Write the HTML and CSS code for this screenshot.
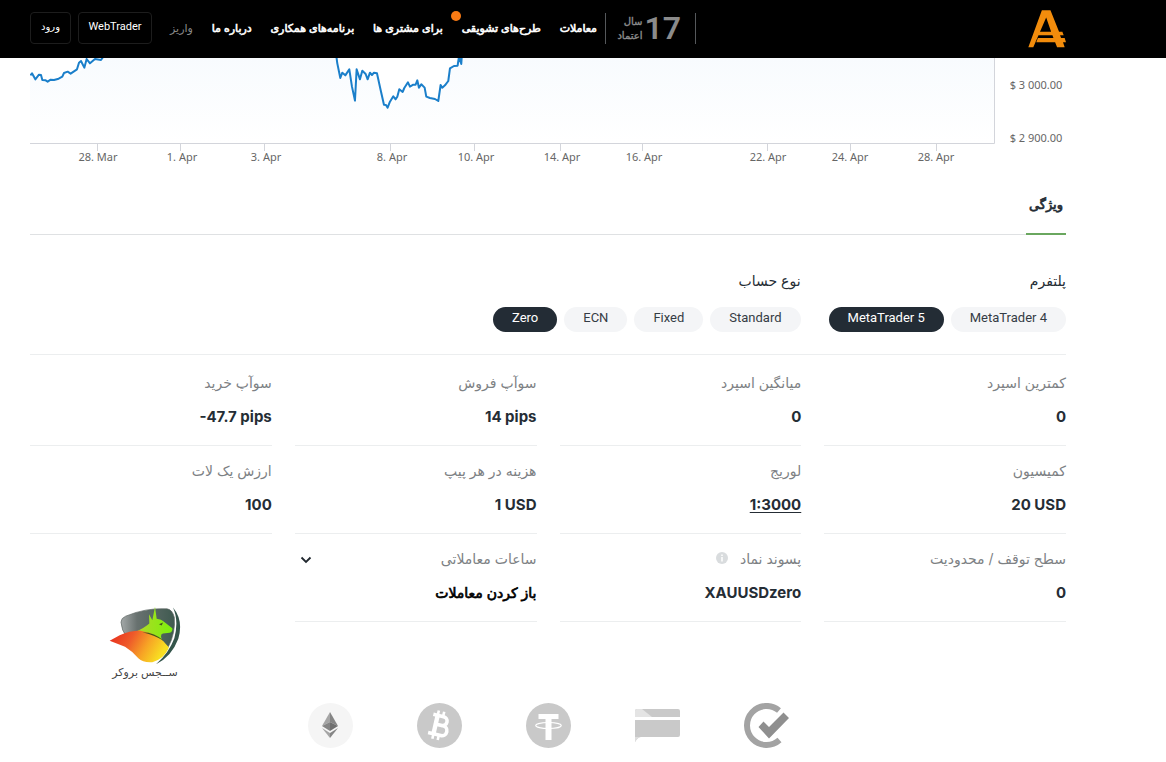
FILE: index.html
```html
<!DOCTYPE html>
<html lang="fa" dir="rtl">
<head>
<meta charset="utf-8">
<meta name="viewport" content="width=device-width, initial-scale=1">
<title>XAUUSD</title>
<link rel="stylesheet" href="styles.css">
</head>
<body>
<header class="header">
  <a class="logo" href="#" aria-label="A">
    <svg viewBox="205 25 115 117" width="38" height="39" aria-hidden="true">
      <path fill="#f28c0c" d="M247 28h26l26 65h10l4 11h-11l3 8h11l4 13h-9l5 15h-23l-6-15h-57l5-13h47l-3-8h-43l4-11h35l-15-43-39 90h-15z"/>
    </svg>
  </a>
  <div class="header-main">
    <div class="trust">
      <span class="trust-number">17</span>
      <span class="trust-text"><span>سال</span><span>اعتماد</span></span>
    </div>
    <nav class="nav">
      <a href="#">معاملات</a>
      <a class="has-dot" href="#">طرح‌های تشویقی</a>
      <a href="#">برای مشتری ها</a>
      <a href="#">برنامه‌های همکاری</a>
      <a href="#">درباره ما</a>
      <a class="muted" href="#">واریز</a>
    </nav>
    <div class="actions">
      <button class="header-btn" type="button">WebTrader</button>
      <button class="header-btn small" type="button">ورود</button>
    </div>
  </div>
</header>
<main class="page">
  <svg class="chart" viewBox="0 0 1036 110" direction="ltr" role="img" aria-label="XAUUSD">
    <defs>
      <linearGradient id="area" x1="0" y1="0" x2="0" y2="1">
        <stop offset="0" stop-color="#f8fbfe"/>
        <stop offset="1" stop-color="#ffffff"/>
      </linearGradient>
    </defs>
    <path fill="url(#area)" d="M0 17 20 24 44 16 70 2V0H307L312 18 325 14 332 14 347 16 358 49 390 24 400 40 408 43 421 8 430 0H965V85H0z"/>
    <g class="price" transform="translate(-30 -8) scale(.3333)">
      <path d="M91 76 96 70 106 88 117 74 123 75 127 90 137 91 143 95 152 89 162 90 176 86 187 80 192 69 203 65 212 71 222 64 231 58 237 38 243 33 253 53 260 27 270 40 285 27 303 30 310 20"/>
      <path d="M1008 10 1012 40 1021 84 1027 68 1036 76 1048 58 1056 110 1065 152 1070 58 1080 88 1087 62 1097 72 1103 88 1110 68 1116 75 1122 68 1131 70 1142 120 1152 164 1158 165 1163 173 1170 155 1180 139 1187 148 1192 140 1198 118 1208 126 1213 114 1224 97 1230 110 1240 104 1247 104 1252 91 1257 113 1264 103 1274 113 1279 140 1290 144 1305 147 1315 153 1322 105 1327 113 1335 106 1345 93 1350 55 1362 48 1373 47 1377 20 1384 42 1386 10"/>
    </g>
    <path class="axis" d="M0 85.500H964.500V0M67.500 86v7M150.500 86v7M234.500 86v7M360.500 86v7M444.500 86v7M530.500 86v7M612.500 86v7M737.500 86v7M820.500 86v7M906.500 86v7"/>
    <g class="labels">
      <text x="68" y="103">28. Mar</text>
      <text x="152" y="103">1. Apr</text>
      <text x="236" y="103">3. Apr</text>
      <text x="362" y="103">8. Apr</text>
      <text x="446" y="103">10. Apr</text>
      <text x="532" y="103">14. Apr</text>
      <text x="614" y="103">16. Apr</text>
      <text x="738" y="103">22. Apr</text>
      <text x="820" y="103">24. Apr</text>
      <text x="906" y="103">28. Apr</text>
      <text x="1006" y="31">$ 3 000.00</text>
      <text x="1006" y="84">$ 2 900.00</text>
    </g>
  </svg>

  <div class="tabs" role="tablist">
    <button class="tab" type="button" role="tab" aria-selected="true">ویژگی</button>
  </div>

  <section class="filters">
    <div class="filter">
      <h2 class="filter-title">پلتفرم</h2>
      <div class="pills">
        <button class="pill" type="button">MetaTrader 4</button>
        <button class="pill active" type="button">MetaTrader 5</button>
      </div>
    </div>
    <div class="filter">
      <h2 class="filter-title">نوع حساب</h2>
      <div class="pills">
        <button class="pill" type="button">Standard</button>
        <button class="pill" type="button">Fixed</button>
        <button class="pill" type="button">ECN</button>
        <button class="pill active" type="button">Zero</button>
      </div>
    </div>
  </section>

  <section class="specs">
    <div class="spec"><div class="spec-label">کمترین اسپرد</div><div class="spec-value">0</div></div>
    <div class="spec"><div class="spec-label">میانگین اسپرد</div><div class="spec-value">0</div></div>
    <div class="spec"><div class="spec-label">سوآپ فروش</div><div class="spec-value"><bdi>14 pips</bdi></div></div>
    <div class="spec"><div class="spec-label">سوآپ خرید</div><div class="spec-value"><bdi dir="ltr">-47.7 pips</bdi></div></div>
    <div class="spec"><div class="spec-label">کمیسیون</div><div class="spec-value"><bdi>20 USD</bdi></div></div>
    <div class="spec"><div class="spec-label">لوریج</div><div class="spec-value"><a href="#">1:3000</a></div></div>
    <div class="spec"><div class="spec-label">هزینه در هر پیپ</div><div class="spec-value"><bdi>1 USD</bdi></div></div>
    <div class="spec"><div class="spec-label">ارزش یک لات</div><div class="spec-value">100</div></div>
    <div class="spec"><div class="spec-label">سطح توقف / محدودیت</div><div class="spec-value">0</div></div>
    <div class="spec">
      <div class="spec-label">پسوند نماد
        <svg class="info" viewBox="0 0 12 12" width="12" height="12" aria-hidden="true"><circle cx="6" cy="6" r="6" fill="#d9dcde"/><path d="M6 2.500v1.500M6 5v4.500" stroke="#fff" stroke-width="1.500"/></svg>
      </div>
      <div class="spec-value">XAUUSDzero</div>
    </div>
    <div class="spec">
      <div class="spec-label">ساعات معاملاتی
        <button class="toggle" type="button" aria-label="ساعات معاملاتی"><svg viewBox="0 0 12 8" width="12" height="8" aria-hidden="true"><path d="M1.500 1.500 6 6l4.500-4.500" fill="none" stroke="#20272e" stroke-width="1.800"/></svg></button>
      </div>
      <div class="spec-value strong">باز کردن معاملات</div>
    </div>
    <div class="watermark">
      <svg viewBox="88 50 216 176" width="72" height="59" aria-hidden="true">
        <defs>
          <linearGradient id="shield" x1="0" x2="1"><stop offset="0" stop-color="#a4a9a9"/><stop offset=".3" stop-color="#68716f"/><stop offset="1" stop-color="#3f5a50"/></linearGradient>
          <linearGradient id="bear" x1="0" x2="1" y1="0" y2=".3"><stop offset="0" stop-color="#e8281c"/><stop offset=".4" stop-color="#ee5a2a"/><stop offset=".7" stop-color="#f7a325"/><stop offset="1" stop-color="#f8df22"/></linearGradient>
          <linearGradient id="bull" x1="0" x2="1"><stop offset="0" stop-color="#b9d52c"/><stop offset="1" stop-color="#7cf00c"/></linearGradient>
        </defs>
        <path d="M124 98Q124 86 138 80 200 54 262 58 278 60 284 84 288 130 266 172L140 140Q126 124 124 98z" fill="url(#shield)" stroke="#59625f" stroke-width="2"/>
        <path d="M280 54Q312 92 296 148 276 202 229 224 268 190 284 146 298 94 280 54z" fill="#34554b"/>
        <path d="M158 132Q200 112 209 102L208 74 218 92 226 52 231 88Q246 90 252 96L278 116Q280 126 270 130L250 132Q238 134 250 160L266 180 220 176z" fill="url(#bull)"/>
        <path d="M90 154 120 137Q150 124 180 123 238 132 268 174 252 210 218 218 190 220 176 206 156 184 136 172 118 171L99 176 94 170 108 163 91 162z" fill="url(#bear)"/>
        <path d="M188 128Q226 128 252 154 228 138 188 128zM238 104l12-5-4 9z" fill="#43551b"/>
      </svg>
      <span>ســجس بروکر</span>
    </div>
  </section>

  <section class="payments">
    <svg viewBox="0 0 45 45" width="45" height="45" aria-hidden="true">
      <circle cx="22.500" cy="22.500" r="22.500" fill="#f5f5f5"/>
      <path d="M22 9 14 23l8-4z" fill="#a5a5a5"/><path d="M22 9l8 14-8-4z" fill="#858585"/>
      <path d="M14 23l8-4v9z" fill="#858585"/><path d="M30 23l-8-4v9z" fill="#707070"/>
      <path d="M14 25l8 5v5z" fill="#a5a5a5"/><path d="M30 25l-8 5v5z" fill="#858585"/>
    </svg>
    <svg viewBox="0 0 45 45" width="45" height="45" aria-hidden="true">
      <circle cx="22.500" cy="22.500" r="22.500" fill="#c9c9c9"/>
      <g transform="rotate(13 22.500 22.500)" fill="none" stroke="#fff">
        <path d="M14 13h10.500a4.500 4.500 0 0 1 0 9H18M18 22h8a5 5 0 0 1 0 10H13" stroke-width="3.600"/>
        <path d="M18.500 12v20" stroke-width="4.400"/>
        <path d="M18.500 8v5M24 8v5M18.500 32v5M24 32v5" stroke-width="2.600"/>
      </g>
    </svg>
    <svg viewBox="0 0 45 45" width="45" height="45" aria-hidden="true">
      <circle cx="22.500" cy="22.500" r="22.500" fill="#c9c9c9"/>
      <path d="M12.500 11h20v5H25.500v21h-6V16h-7z" fill="#fff"/>
      <ellipse cx="22.500" cy="22.500" rx="12.800" ry="3" fill="none" stroke="#fff" stroke-width="1.200"/>
    </svg>
    <svg viewBox="0 0 45 45" width="45" height="45" aria-hidden="true">
      <path d="M0 8Q0 6 2 6h41q2 0 2 2v6H0z" fill="#c9c9c9"/><path d="M0 8Q0 6 2 6h5l10 8H0z" fill="#e4e4e4"/>
      <path d="M0 17h45v15q0 2-2 2H6q-3 0-6 5z" fill="#c9c9c9"/><path d="M6 34q-3 0-6 5v-5z" fill="#dedede"/>
    </svg>
    <svg viewBox="0 0 45 45" width="45" height="45" aria-hidden="true">
      <path d="M35 7.500A19.500 19.500 0 1 0 35.500 37" fill="none" stroke="#a3a3a3" stroke-width="6"/>
      <path d="M14.500 24 19.500 18.500 25 24 39.500 9.500 45 15 25 35.500z" fill="#8f8f8f"/>
    </svg>
  </section>
</main>
</body>
</html>
```
FILE: styles.css
```css
* { box-sizing: border-box; }
body {
  margin: 0;
  background: #fff;
  color: #252d35;
  font-family: Inter, "DejaVu Sans", sans-serif;
}
a { color: inherit; text-decoration: none; }
button { font-family: inherit; cursor: pointer; }

.header {
  display: flex;
  align-items: center;
  justify-content: space-between;
  height: 58px;
  padding: 0 100px 2px 30px;
  background: #000;
  color: #fff;
}
.logo { display: flex; }
.header-main {
  display: flex;
  align-items: center;
  flex: 0 1 666px;
}
.trust {
  display: flex;
  align-items: center;
  gap: 2px;
  width: 91px;
  height: 31px;
  padding-right: 14px;
  border-left: 1px solid #55585b;
  border-right: 1px solid #55585b;
  color: #8b8b8b;
}
.trust-number {
  font: 600 32px/31px Roboto, sans-serif;
}
.trust-text {
  display: flex;
  flex-direction: column;
  font-size: 10px;
  line-height: 14px;
  -webkit-text-stroke: 0.4px currentColor;
}
.nav {
  display: flex;
  flex: 1;
  justify-content: space-between;
  padding: 0 8px 0 18px;
  font-size: 11px;
  white-space: nowrap;
  -webkit-text-stroke: 0.6px currentColor;
}
.muted { color: #8b8b8b; -webkit-text-stroke: 0; }
.has-dot { position: relative; }
.has-dot::after {
  content: "";
  position: absolute;
  top: -10px;
  left: -11px;
  width: 10px;
  height: 10px;
  border-radius: 50%;
  background: #f97a14;
}
.actions { display: flex; gap: 7px; }
.header-btn {
  width: 74px;
  height: 32px;
  padding: 0 0 4px;
  border: 1px solid #1d1d1d;
  border-radius: 4px;
  background: #000;
  color: #fff;
  font-family: Roboto, "DejaVu Sans", sans-serif;
  font-size: 11px;
}
.header-btn.small { width: 41px; font-size: 10px; }

.page { padding: 0 100px 0 30px; }
.chart { display: block; width: 100%; height: auto; }
.price path {
  fill: none;
  stroke: #1b7fca;
  stroke-width: 6;
  stroke-linejoin: round;
}
.axis { fill: none; stroke: #d3d5db; stroke-width: 1; }
.labels {
  fill: #666;
  font-family: "Noto Sans", sans-serif;
  font-size: 11px;
  text-anchor: middle;
}

.tabs {
  display: flex;
  margin-top: 16px;
  border-bottom: 1px solid #dfe1e3;
}
.tab {
  height: 51px;
  margin-bottom: -1px;
  padding: 0 3px 10px;
  border: 0;
  border-bottom: 2px solid #6aa75f;
  background: none;
  color: #252d35;
  font-size: 13px;
  -webkit-text-stroke: 0.7px currentColor;
}

.filters {
  display: flex;
  gap: 28px;
  padding: 35px 0 22px;
  border-bottom: 1px solid #eceeef;
}
.filter-title {
  margin: 0 0 15px;
  font-size: 14px;
  font-weight: 400;
  line-height: 22px;
}
.pills { display: flex; gap: 7px; }
.pill {
  height: 25px;
  padding: 0 19px 4px;
  border: 0;
  border-radius: 13px;
  background: #f4f5f7;
  color: #343c45;
  font-family: Roboto, sans-serif;
  font-size: 13px;
}
.pill.active { background: #232c35; color: #fff; }

.specs {
  position: relative;
  display: grid;
  grid-template-columns: repeat(4, 1fr);
  column-gap: 23px;
  padding-top: 3px;
}
.spec {
  height: 88px;
  padding-top: 12px;
  border-bottom: 1px solid #eceeef;
}
.spec-label {
  display: flex;
  align-items: center;
  height: 24px;
  color: #7d8184;
  font-size: 14px;
}
.spec-value {
  margin-top: 10px;
  font-size: 15px;
  font-weight: 700;
  line-height: 26px;
}
.spec-value a { text-decoration: underline; text-underline-offset: 2px; }
.spec-value.strong {
  color: #000;
  font-size: 14px;
  font-weight: 400;
  -webkit-text-stroke: 0.7px currentColor;
}
.info { margin-right: 12px; }
.toggle {
  display: flex;
  margin-right: auto;
  padding: 8px 5px 4px;
  border: 0;
  background: none;
}
.watermark {
  position: absolute;
  left: 79px;
  bottom: -57px;
  display: flex;
  flex-direction: column;
  align-items: center;
  width: 72px;
  color: #444;
  font-size: 11px;
  line-height: 14px;
  white-space: nowrap;
}

.payments {
  display: flex;
  flex-direction: row-reverse;
  justify-content: center;
  gap: 64px;
  padding: 81px 0 14px;
}
.payments { flex-direction: row-reverse; }
```
